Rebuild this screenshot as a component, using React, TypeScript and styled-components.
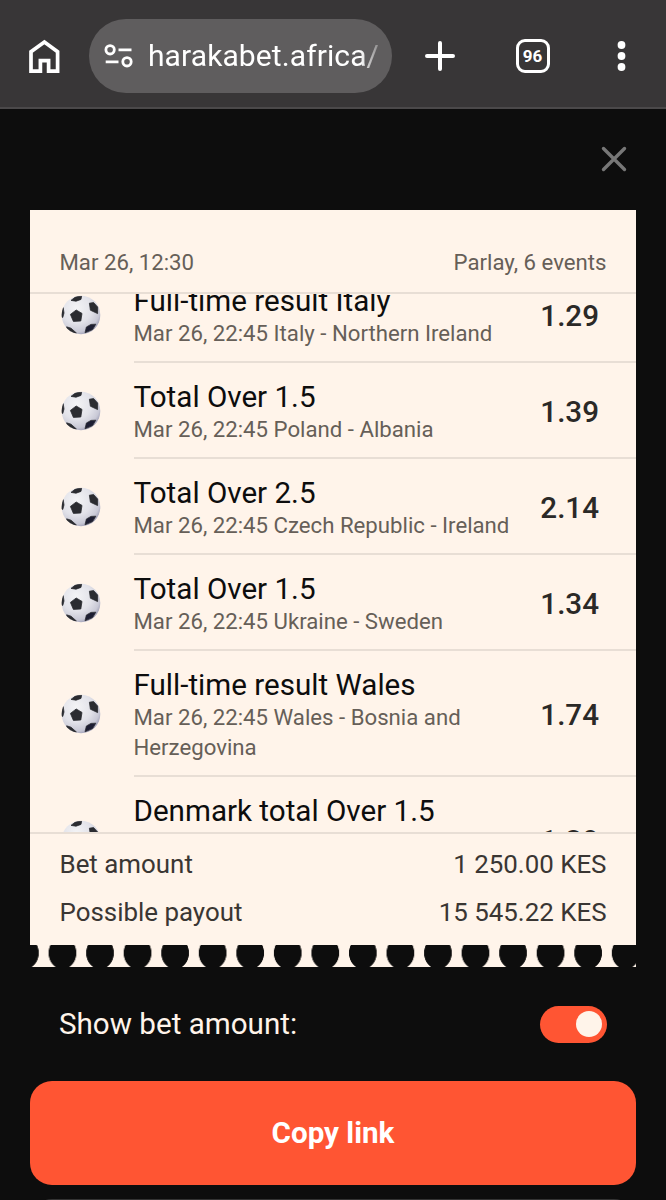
import React, { useState } from 'react';
import { createGlobalStyle, styled } from 'styled-components';

interface BetEvent {
  title: string;
  info: string;
  odds: string;
}

const events: BetEvent[] = [
  {
    title: 'Full-time result Italy',
    info: 'Mar 26, 22:45 Italy - Northern Ireland',
    odds: '1.29',
  },
  {
    title: 'Total Over 1.5',
    info: 'Mar 26, 22:45 Poland - Albania',
    odds: '1.39',
  },
  {
    title: 'Total Over 2.5',
    info: 'Mar 26, 22:45 Czech Republic - Ireland',
    odds: '2.14',
  },
  {
    title: 'Total Over 1.5',
    info: 'Mar 26, 22:45 Ukraine - Sweden',
    odds: '1.34',
  },
  {
    title: 'Full-time result Wales',
    info: 'Mar 26, 22:45 Wales - Bosnia and Herzegovina',
    odds: '1.74',
  },
  {
    title: 'Denmark total Over 1.5',
    info: '',
    odds: '1.39',
  },
];

const HomeIcon = () => (
  <svg width="32" height="36" viewBox="0 0 32 36" fill="none">
    <path
      d="M3 33.2V13.7L16.4 4.1L29.6 13.7V33.2H20.6V22.6H12.4V33.2Z"
      stroke="#fff"
      strokeWidth="3.7"
    />
  </svg>
);

const SiteInfoIcon = () => (
  <svg width="30" height="26" viewBox="0 0 30 26" fill="none">
    <g stroke="#fff" strokeWidth="2.8">
      <circle cx="6.1" cy="6.8" r="4.2" />
      <path d="M14.5 6.8H27.5M1.7 18.8H14.5" />
      <circle cx="23" cy="18.8" r="4.2" />
    </g>
  </svg>
);

const PlusIcon = () => (
  <svg width="30" height="30" viewBox="0 0 30 30">
    <path
      d="M15 2V28M2 15H28"
      stroke="#fff"
      strokeWidth="4"
      strokeLinecap="round"
    />
  </svg>
);

const MenuIcon = () => (
  <svg width="10" height="32" viewBox="0 0 10 32" fill="#fff">
    <circle cx="5.5" cy="5" r="3.9" />
    <circle cx="5.5" cy="16" r="3.9" />
    <circle cx="5.5" cy="27" r="3.9" />
  </svg>
);

const CloseIcon = () => (
  <svg width="26" height="26" viewBox="0 0 26 26">
    <path
      d="M2.5 2.5L23.5 23.5M23.5 2.5L2.5 23.5"
      stroke="#777"
      strokeWidth="3.4"
      strokeLinecap="round"
    />
  </svg>
);

const BallIcon = ({ id }: { id: string }) => (
  <svg width="40" height="40" viewBox="0 0 40 40">
    <defs>
      <radialGradient id={`shade-${id}`} cx="0.38" cy="0.32" r="0.72">
        <stop offset="0" stopColor="#f4f4f6" />
        <stop offset="0.55" stopColor="#e2e2e9" />
        <stop offset="0.85" stopColor="#c9c9d6" />
        <stop offset="1" stopColor="#9c9cb4" />
      </radialGradient>
      <clipPath id={`ball-${id}`}>
        <circle cx="20" cy="20" r="19.3" />
      </clipPath>
    </defs>
    <circle cx="20" cy="20" r="19.3" fill={`url(#shade-${id})`} />
    <g
      clipPath={`url(#ball-${id})`}
      fill="#2b2c31"
      stroke="#2b2c31"
      strokeWidth="0.8"
      strokeLinejoin="round"
    >
      <path d="M9.4 19.4L15.2 15L21 18.4L19.8 26L12.4 26.4Z" />
      <path d="M10 5.4L14.4 2L20.6 1.2L20 4.4L15 6.2Z" />
      <path d="M28.4 8.2L32.6 7.6L36.6 12L36.6 18.6L29.4 15.2Z" />
      <path d="M25.4 32L30 29.4L34.8 29.2L31.6 34.6L24 37.8Z" fill="#1d1e33" />
      <path d="M5.6 31.8L10 33.2L15.4 38L12 38.4L5.8 34Z" />
      <path d="M0 14L2.2 12.6L3 18L1.8 22.4L0 22Z" />
    </g>
  </svg>
);

/** 베팅 공유 화면 */
const App = () => {
  const [showAmount, setShowAmount] = useState(true);

  return (
    <Screen>
      <GlobalStyle />
      <BrowserBar>
        <HomeIcon />
        <AddressBar>
          <SiteInfoIcon />
          <Url>harakabet.africa/</Url>
        </AddressBar>
        <BarActions>
          <PlusIcon />
          <TabCount>96</TabCount>
          <MenuIcon />
        </BarActions>
      </BrowserBar>
      <CloseRow>
        <CloseButton aria-label="Close">
          <CloseIcon />
        </CloseButton>
      </CloseRow>
      <Ticket>
        <TicketHeader>
          <span>Mar 26, 12:30</span>
          <span>Parlay, 6 events</span>
        </TicketHeader>
        <EventViewport>
          <EventList>
            {events.map((event, index) => (
              <EventRow key={index}>
                <BallIcon id={String(index)} />
                <EventBody>
                  <EventText>
                    <EventTitle>{event.title}</EventTitle>
                    <EventInfo $empty={!event.info}>{event.info}</EventInfo>
                  </EventText>
                  <Odds>{event.odds}</Odds>
                </EventBody>
              </EventRow>
            ))}
          </EventList>
        </EventViewport>
        <TicketFooter>
          {showAmount && (
            <>
              <AmountRow>
                <span>Bet amount</span>
                <span>1 250.00 KES</span>
              </AmountRow>
              <AmountRow>
                <span>Possible payout</span>
                <span>15 545.22 KES</span>
              </AmountRow>
            </>
          )}
        </TicketFooter>
        <TicketEdge />
      </Ticket>
      <ToggleRow>
        <span>Show bet amount:</span>
        <Toggle
          role="switch"
          aria-label="Show bet amount"
          aria-checked={showAmount}
          $on={showAmount}
          onClick={() => setShowAmount(!showAmount)}
        >
          <Knob />
        </Toggle>
      </ToggleRow>
      <CopyButton>Copy link</CopyButton>
      <NextButton aria-label="Share" />
    </Screen>
  );
};

const GlobalStyle = createGlobalStyle`
  * {
    box-sizing: border-box;
  }
  body {
    margin: 0;
    background: #0d0d0d;
    font-family: Roboto, sans-serif;
  }
  button {
    padding: 0;
    border: 0;
    font-family: inherit;
  }
  svg {
    display: block;
    flex-shrink: 0;
  }
`;

const Screen = styled.div`
  display: flex;
  flex-direction: column;
  width: 666px;
  height: 1200px;
  overflow: hidden;
  background: #0d0d0d;
`;

const BrowserBar = styled.header`
  display: flex;
  align-items: center;
  flex-shrink: 0;
  height: 109px;
  padding: 4px 40px 0 28px;
  background: #383637;
  border-bottom: 2px solid #4b494a;
`;

const AddressBar = styled.div`
  display: flex;
  align-items: center;
  gap: 14px;
  width: 303px;
  height: 74px;
  margin: 0 33px 0 29px;
  padding-left: 15px;
  border-radius: 37px;
  background: #5f5d5e;
`;

const Url = styled.span`
  width: 234px;
  padding-top: 1px;
  white-space: nowrap;
  color: #fff;
  font-size: 30px;
  line-height: 40px;
  letter-spacing: 0.1px;
  mask-image: linear-gradient(to right, #000 212px, transparent 238px);
`;

const BarActions = styled.div`
  display: flex;
  align-items: center;
  justify-content: space-between;
  flex: 1;
`;

const TabCount = styled.div`
  display: flex;
  align-items: center;
  justify-content: center;
  width: 34px;
  height: 34px;
  margin-left: -6px;
  border: 3.5px solid #fff;
  border-radius: 9px;
  color: #fff;
  font-size: 17px;
  font-weight: 700;
`;

const CloseRow = styled.div`
  display: flex;
  justify-content: flex-end;
  flex-shrink: 0;
  height: 101px;
  padding: 37px 39px 0 0;
`;

const CloseButton = styled.button`
  width: 26px;
  height: 26px;
  background: none;
`;

const Ticket = styled.section`
  flex-shrink: 0;
  height: 757px;
  margin: 0 30px;
  background: #fff4ea;
`;

const TicketHeader = styled.div`
  display: flex;
  justify-content: space-between;
  height: 84px;
  padding: 37px 29.5px 0;
  border-bottom: 2px solid #e8ded5;
  color: #665f58;
  font-size: 22.2px;
  line-height: 30px;
`;

const EventViewport = styled.div`
  height: 538px;
  overflow: hidden;
`;

/* 스크롤된 상태의 목록 */
const EventList = styled.div`
  margin-top: -27px;
`;

const EventRow = styled.div`
  display: flex;
  align-items: center;
  gap: 32.5px;
  padding-left: 31px;
`;

const EventBody = styled.div`
  display: flex;
  align-items: center;
  justify-content: space-between;
  flex: 1;
  padding: 15px 37px 13px 0;
  border-bottom: 2px solid #e8ded5;
`;

const EventText = styled.div`
  width: 382px;
`;

const EventTitle = styled.div`
  padding-top: 3px;
  color: #0d0d0d;
  font-size: 29.6px;
  line-height: 33px;
  white-space: nowrap;
`;

const EventInfo = styled.div<{ $empty: boolean }>`
  min-height: ${(props) => (props.$empty ? '60px' : '30px')};
  color: #665f58;
  font-size: 22.2px;
  line-height: 30px;
`;

const Odds = styled.div`
  padding-top: 2px;
  color: #2b2927;
  font-size: 29.6px;
  font-weight: 500;
  line-height: 34px;
`;

const TicketFooter = styled.div`
  height: 113px;
  padding-top: 6px;
  border-top: 2px solid #e8ded5;
`;

const AmountRow = styled.div`
  display: flex;
  align-items: center;
  justify-content: space-between;
  height: 48px;
  padding: 0 29.5px;
  color: #3a3633;
  font-size: 25.9px;
  line-height: 30px;
`;

/* 티켓 하단의 뜯어진 가장자리 */
const TicketEdge = styled.div`
  height: 22px;
  background-image: radial-gradient(
    ellipse 14.2px 16.4px at 50% 8px,
    #0d0d0d 95%,
    #fff4ea 100%
  );
  background-size: 37.55px 22px;
  background-position-x: 13.7px;
`;

const ToggleRow = styled.div`
  display: flex;
  align-items: center;
  justify-content: space-between;
  flex-shrink: 0;
  height: 114px;
  padding: 0 59px;
  color: #fff4ea;
  font-size: 29.6px;
`;

const Toggle = styled.button<{ $on: boolean }>`
  display: flex;
  align-items: center;
  justify-content: ${(props) => (props.$on ? 'flex-end' : 'flex-start')};
  width: 67px;
  height: 37px;
  padding: 0 5.5px;
  border-radius: 19px;
  background: ${(props) => (props.$on ? '#ff5533' : '#4b494a')};
`;

const Knob = styled.span`
  width: 26px;
  height: 26px;
  border-radius: 50%;
  background: #fff4ea;
`;

const CopyButton = styled.button`
  flex-shrink: 0;
  height: 104px;
  margin: 0 30px;
  border-radius: 22px;
  background: #ff5533;
  color: #fff;
  font-size: 29.6px;
  font-weight: 700;
`;

const NextButton = styled.button`
  flex-shrink: 0;
  height: 104px;
  margin: 14px 30px 0;
  border-radius: 22px;
  background: #333;
`;

export default App;
